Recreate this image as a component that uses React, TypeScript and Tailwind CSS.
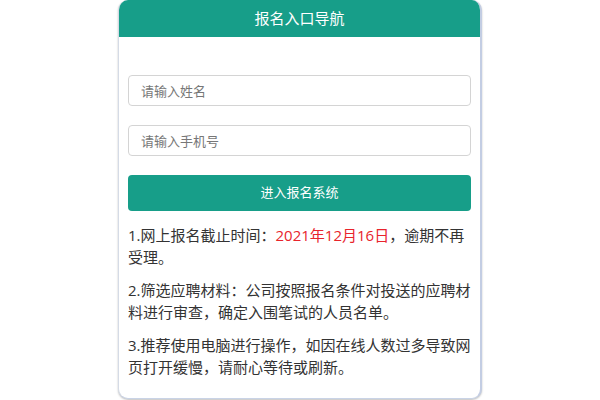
export default function App() {
  return (
    <div
      className="flex h-[400px] w-[600px] justify-center overflow-hidden bg-white"
      style={{ fontFamily: '"Open Sans", "Noto Sans CJK SC", sans-serif' }}
    >
      <div className="flex h-[399px] w-[364px] flex-col overflow-hidden rounded-[10px] border-b border-l border-r-2 border-l-[#d5dbe6] border-r-[#c3cde3] border-b-[#c9d3e6] bg-white shadow-[0_1px_2px_rgba(0,0,0,0.25)]">
        <div className="flex h-[37px] shrink-0 items-center justify-center bg-[#179e89] text-[15px] text-white">
          报名入口导航
        </div>
        <div className="flex flex-col px-[9px] pt-[38px]">
          <input
            type="text"
            placeholder="请输入姓名"
            className="h-[31px] rounded-[4px] border border-[#d4d4d4] px-3 text-[13px] text-[#555] placeholder:text-[#777] focus:outline-none"
          />
          <input
            type="text"
            placeholder="请输入手机号"
            className="mt-[19px] h-[31px] rounded-[4px] border border-[#d4d4d4] px-3 text-[13px] text-[#555] placeholder:text-[#777] focus:outline-none"
          />
          <button className="mt-[19px] h-[36px] rounded-[4px] bg-[#179e89] text-[13px] text-white">
            进入报名系统
          </button>
          <div className="mt-[13px] flex flex-col gap-[11px] text-[15px] leading-[22px] text-[#333]">
            <p>
              1.网上报名截止时间：<span className="text-[#e8242c]">2021年12月16日</span>，逾期不再受理。
            </p>
            <p>2.筛选应聘材料：公司按照报名条件对投送的应聘材料进行审查，确定入围笔试的人员名单。</p>
            <p>3.推荐使用电脑进行操作，如因在线人数过多导致网页打开缓慢，请耐心等待或刷新。</p>
          </div>
        </div>
      </div>
    </div>
  );
}
